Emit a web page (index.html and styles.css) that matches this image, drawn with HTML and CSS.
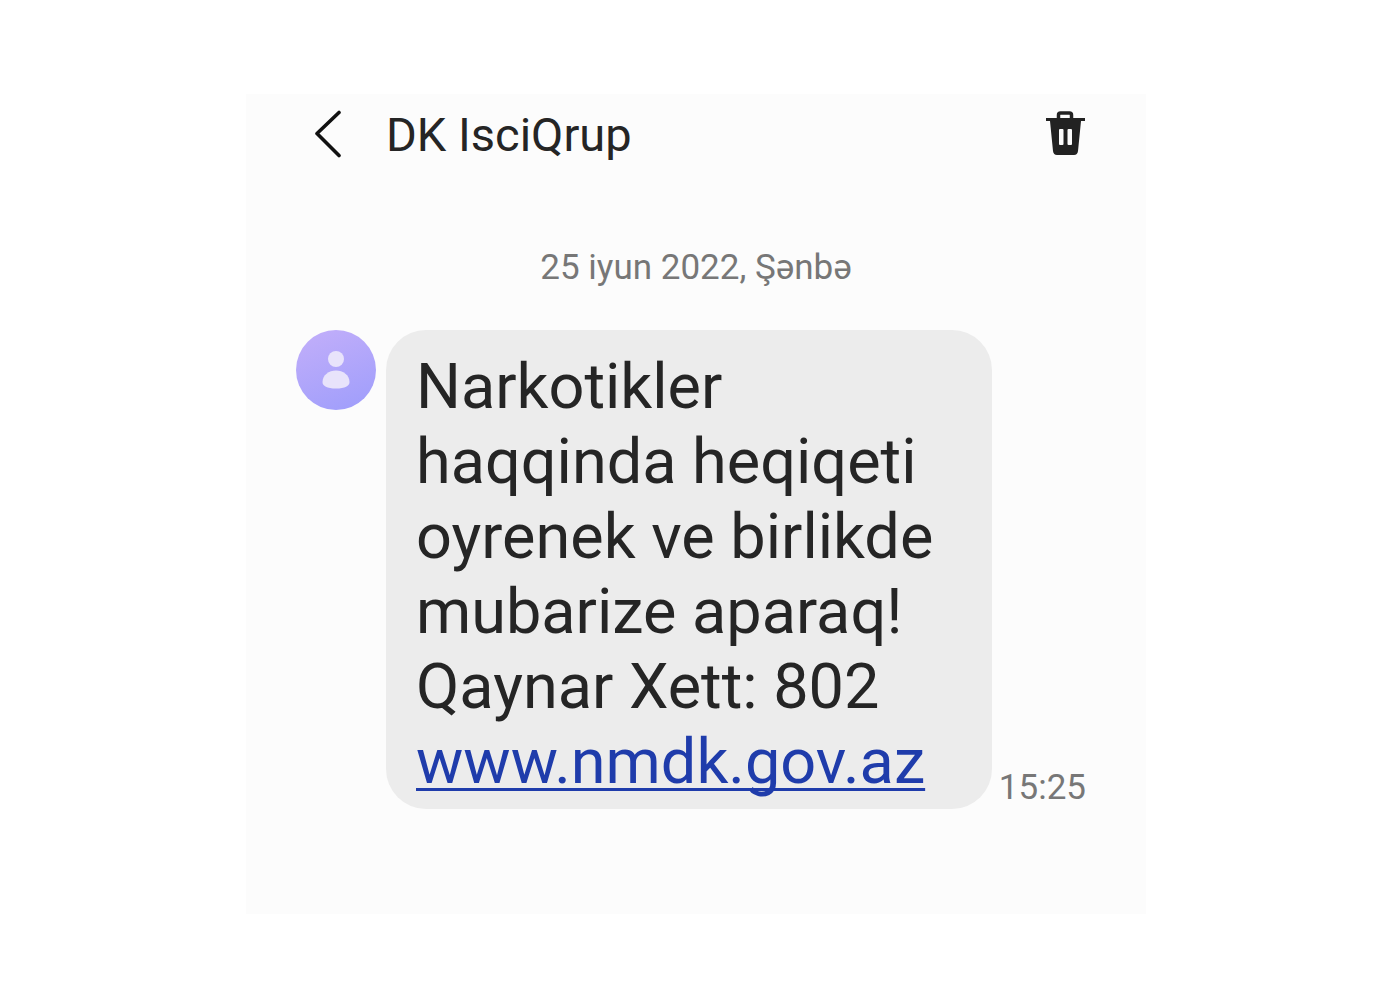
FILE: index.html
```html
<!DOCTYPE html>
<html lang="az">
<head>
  <meta charset="UTF-8">
  <meta name="viewport" content="width=device-width, initial-scale=1.0">
  <title>DK IsciQrup</title>
  <link rel="stylesheet" href="styles.css">
</head>
<body>
  <main class="chat">
    <header class="chat-header">
      <button type="button" class="icon-button" aria-label="Geri">
        <svg width="30" height="50" viewBox="0 0 30 50" fill="none" stroke="#111" stroke-width="3.6" stroke-linecap="round" stroke-linejoin="round">
          <path d="M26 2.500 L4 23.500 L26 45.500"/>
        </svg>
      </button>
      <h1 class="chat-title">DK IsciQrup</h1>
      <button type="button" class="icon-button" aria-label="Sil">
        <svg width="40" height="50" viewBox="0 0 40 50">
          <path d="M12.500 9 V5 Q12.500 3 14.500 3 H23.500 Q25.500 3 25.500 5 V9" fill="none" stroke="#222" stroke-width="3.500"/>
          <path d="M0 8 H39 V11 H35 L32 41 Q31.500 45 28 45 H11 Q7.500 45 7 41 L4 11 H0 Z" fill="#222"/>
          <rect x="13" y="19" width="4.500" height="16" rx="1" fill="#fcfcfc"/>
          <rect x="21.500" y="19" width="4.500" height="16" rx="1" fill="#fcfcfc"/>
        </svg>
      </button>
    </header>
    <p class="chat-date">25 iyun 2022, Şənbə</p>
    <div class="message">
      <svg class="avatar" viewBox="0 0 80 80" aria-hidden="true">
        <defs>
          <linearGradient id="avatarFill" x1="0.2" y1="0" x2="0.6" y2="1">
            <stop offset="0" stop-color="#c1aefa"/>
            <stop offset="1" stop-color="#a29ffb"/>
          </linearGradient>
        </defs>
        <circle cx="40" cy="40" r="40" fill="url(#avatarFill)"/>
        <circle cx="40" cy="29" r="8" fill="#e8e3fb"/>
        <path d="M26.500 52 C26.500 45 33 40.500 40 40.500 S53.500 45 53.500 52 C53.500 56 49 58.500 40 58.500 S26.500 56 26.500 52 Z" fill="#e8e3fb"/>
      </svg>
      <div class="bubble">
        <p>Narkotikler haqqinda heqiqeti oyrenek ve birlikde mubarize aparaq!</p>
        <p>Qaynar Xett: 802</p>
        <p><a href="#">www.nmdk.gov.az</a></p>
      </div>
      <time class="message-time" datetime="2022-06-25T15:25">15:25</time>
    </div>
  </main>
</body>
</html>
```
FILE: styles.css
```css
* {
  box-sizing: border-box;
  margin: 0;
}

body {
  min-height: 100vh;
  display: flex;
  align-items: center;
  justify-content: center;
  background-color: #fff;
  font-family: Roboto, sans-serif;
  color: #252525;
}

.chat {
  width: 100%;
  max-width: 900px;
  padding: 13px 60px 105px 50px;
  background-color: #fcfcfc;
}

.chat-header {
  display: flex;
  align-items: center;
  padding-left: 17px;
}

.icon-button {
  display: flex;
  padding: 0;
  border: none;
  background: none;
  cursor: pointer;
}

.chat-title {
  flex: 1;
  margin-left: 43px;
  font-size: 47px;
  line-height: 56px;
  font-weight: 400;
}

.chat-date {
  margin-top: 83px;
  padding-left: 10px;
  font-size: 35px;
  line-height: 44px;
  text-align: center;
  color: #777;
}

.message {
  display: flex;
  align-items: flex-start;
  margin-top: 40px;
}

.avatar {
  flex: none;
  width: 80px;
  height: 80px;
  margin-right: 10px;
}

.bubble {
  flex: 1;
  padding: 19px 30px 10px;
  border-radius: 40px;
  background-color: #ececec;
  font-size: 63px;
  line-height: 75px;
}

.bubble a {
  color: #1f3cab;
  text-decoration: underline;
  text-decoration-thickness: 3px;
  text-decoration-skip-ink: none;
  text-underline-offset: 5px;
}

.message-time {
  align-self: flex-end;
  margin-left: 7px;
  font-size: 35px;
  line-height: 42px;
  color: #777;
}
```
